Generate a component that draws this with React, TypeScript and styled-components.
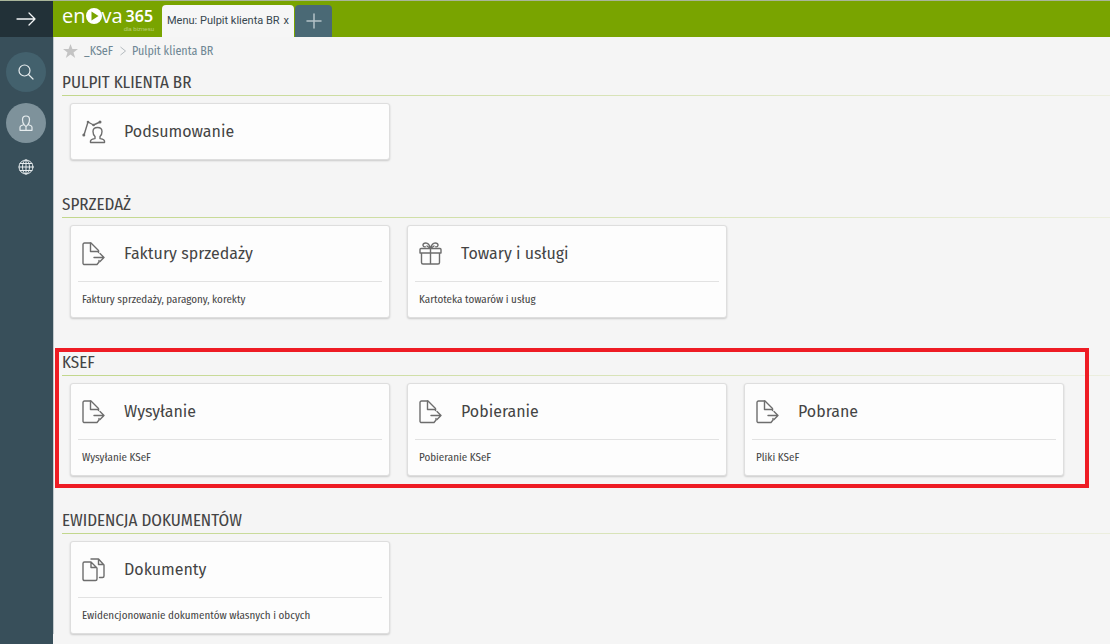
import React from 'react';
import styled, { createGlobalStyle, css } from 'styled-components';

const GlobalStyle = createGlobalStyle`
  *, *::before, *::after { box-sizing: border-box; }
  body {
    margin: 0;
    background: #f5f5f5;
    color: #444;
    font-family: "Fira Sans Condensed", "Noto Sans CJK JP", "Noto Sans", sans-serif;
  }
`;

const Page = styled.div`
  display: flex;
  min-height: 100vh;
  border-top: 1px solid #a9b59a;
`;

const Sidebar = styled.nav`
  flex: 0 0 53px;
  display: flex;
  flex-direction: column;
  align-items: center;
  background: #384f5a;
`;

const ExpandButton = styled.button`
  display: flex;
  align-items: center;
  justify-content: center;
  align-self: stretch;
  height: 36px;
  margin-bottom: 15px;
  padding: 0 1px 0 0;
  border: 0;
  background: #223138;
  color: #f4f6f7;
`;

const RoundButton = styled.button<{ $tone?: string; $small?: boolean }>`
  display: flex;
  align-items: center;
  justify-content: center;
  width: 40px;
  height: ${p => (p.$small ? 26 : 40)}px;
  margin: 0 1px 11px 0;
  padding: 0;
  border: 0;
  border-radius: 50%;
  background: ${p => p.$tone ?? 'transparent'};
  color: #e6ecee;
`;

const Main = styled.div`
  flex: 1;
  min-width: 0;
`;

const TopBar = styled.header`
  display: flex;
  align-items: flex-end;
  height: 36px;
  background: #79a400;
`;

const Logo = styled.a`
  display: flex;
  flex-direction: column;
  align-items: flex-end;
  align-self: flex-start;
  width: 101px;
  margin-right: 8px;
  padding: 5px 0 0 9px;
  color: #fff;
  text-decoration: none;
`;

const LogoLine = styled.span`
  display: flex;
  align-items: center;
  width: 92px;
  font: 20px/20px "Open Sans", sans-serif;
`;

const LogoNumber = styled.span`
  margin-left: 3px;
  font: 600 16px/20px "Noto Sans", sans-serif;
`;

const LogoTag = styled.span`
  font: 6px/6px "Liberation Sans", sans-serif;
  color: #bdd07c;
`;

const Tab = styled.div`
  display: flex;
  align-items: center;
  height: 32px;
  padding: 0 5px;
  border-radius: 4px 4px 0 0;
  background: #f6f6f6;
  color: #37474f;
  font: 11px/16px Roboto, Arial, sans-serif;
`;

const TabClose = styled.button`
  margin-left: 4px;
  padding: 0;
  border: 0;
  background: none;
  color: inherit;
  font: inherit;
`;

const AddTab = styled.button`
  display: flex;
  align-items: center;
  justify-content: center;
  width: 37px;
  height: 32px;
  margin-left: 1px;
  padding: 0;
  border: 0;
  border-radius: 4px 4px 0 0;
  background: #4a6975;
  color: #b4c2c8;
`;

const Content = styled.main`
  padding-left: 8px;
  border-left: 1px solid #c3cacd;
`;

const Breadcrumbs = styled.nav`
  display: flex;
  align-items: center;
  height: 27px;
  margin-bottom: 5px;
  font-size: 12px;
  line-height: 16px;
`;

const Crumb = styled.a`
  color: #6f8794;
  text-decoration: none;
`;

const CrumbStar = styled.button`
  display: flex;
  margin: 0 6px 0 1px;
  padding: 0;
  border: 0;
  background: none;
`;

const Chevron = styled.svg`
  margin: 0 5px 0 6px;
`;

const Section = styled.section`
  position: relative;
  margin-bottom: 31px;
`;

const SectionTitle = styled.h2`
  margin: 0 0 7px;
  padding: 2px 0 1px;
  background: linear-gradient(to right, #c2d78c, #eceedf) left bottom / 100% 1px no-repeat;
  font-size: 17px;
  font-weight: 400;
  line-height: 24px;
  text-transform: uppercase;
`;

const CardGrid = styled.div`
  display: grid;
  grid-template-columns: repeat(auto-fill, 320px);
  gap: 17px;
  padding-left: 8px;
`;

const Card = styled.a`
  display: block;
  padding: 0 7px;
  border: 1px solid #dedede;
  border-radius: 3px;
  background: #fdfdfd;
  box-shadow: 0 1px 2px rgba(0, 0, 0, 0.18);
  color: inherit;
  text-decoration: none;
`;

const CardHead = styled.div`
  display: flex;
  align-items: center;
  gap: 18px;
  height: 55px;
  padding-left: 4px;
`;

const CardTitle = styled.h3`
  margin: 0;
  font-family: "Fira Sans", "Noto Sans CJK JP", "Noto Sans", sans-serif;
  font-size: 16px;
  font-weight: 400;
  line-height: 24px;
`;

const CardNote = styled.p`
  margin: 0;
  padding: 10px 4px 9px;
  border-top: 1px solid #e2e2e2;
  font-size: 11px;
  line-height: 16px;
`;

const Highlight = styled.div`
  position: absolute;
  top: -1px;
  right: 21px;
  bottom: -12px;
  left: -7px;
  border: 4px solid #ee1c24;
  pointer-events: none;
`;

const lineArt = css`
  fill: none;
  stroke: currentColor;
  stroke-linecap: round;
  stroke-linejoin: round;
`;

const Icon = styled.svg<{ $weight?: number }>`
  ${lineArt}
  flex: none;
  stroke-width: ${p => p.$weight ?? 1};
`;

const CardIcon = styled(Icon)`
  color: #6d6d6d;
`;

type IconName = 'summary' | 'export' | 'gift' | 'documents';

const shapes: Record<IconName, React.ReactNode> = {
  summary: (
    <>
      <path d="M2 15L6 2l5.500 3L18 2" />
      <g fill="currentColor" stroke="none">
        <circle cx="1.800" cy="15" r="1.500" />
        <circle cx="6" cy="2" r="1.300" />
        <circle cx="11.500" cy="5" r="1.300" />
        <circle cx="18" cy="2" r="1.500" />
      </g>
      <path d="M13 18.500v-2c-1.600-1.400-2-3.300-2-5 0-2.500 1.500-4 4.500-4s4.500 1.500 4.500 4c0 1.700-.4 3.600-2 5v2c2 .5 4.500 1 4.500 2.500v1.500h-14V21c0-1.500 2.500-2 4.500-2.500z" />
    </>
  ),
  export: (
    <>
      <path d="M17 18.500v1.500l-2 2.500H2.500c-.8 0-1.500-.5-1.500-1.300V2.500C1 1.600 1.600 1 2.500 1H9l7.500 7.500v2" />
      <path d="M8.500 1v8.500h8M12 15.500h10M18 11.500l4 4-4 4" />
    </>
  ),
  gift: (
    <>
      <path d="M2 6.500h19c.7 0 1 .3 1 1V11H1V7.500c0-.7.300-1 1-1zM2.500 11v9.500c0 1 .5 1.500 1.500 1.500h15c1 0 1.500-.5 1.500-1.500V11M11.500 6.500V22" />
      <path d="M11.500 6.500C10.500 2.500 8.500 1 6.800 1 5 1 3.800 2 4 3.300c.2 1 1.200 1.700 2.200 1.500M11.500 6.500C12.500 2.500 14.500 1 16.200 1 18 1 19.200 2 19 3.300c-.2 1-1.200 1.700-2.200 1.500M11.500 6.500L8 4M11.500 6.500L15 4" />
    </>
  ),
  documents: (
    <>
      <path d="M2.500 4H9l6 6v11c0 .8-.5 1.500-1.500 1.500h-11C1.600 22.500 1 22 1 21V5.500C1 4.500 1.500 4 2.500 4zM9 4v5.500h5.500" />
      <path d="M9 1h7.500L22 7v11c0 1-.5 1.500-1.500 1.500h-3M16.500 1v5.500h5" />
    </>
  ),
};

const groups: {
  title: string;
  marked?: boolean;
  cards: { icon: IconName; title: string; note?: string }[];
}[] = [
  { title: 'Pulpit klienta BR', cards: [{ icon: 'summary', title: 'Podsumowanie' }] },
  {
    title: 'Sprzedaż',
    cards: [
      { icon: 'export', title: 'Faktury sprzedaży', note: 'Faktury sprzedaży, paragony, korekty' },
      { icon: 'gift', title: 'Towary i usługi', note: 'Kartoteka towarów i usług' },
    ],
  },
  {
    title: 'KSeF',
    marked: true,
    cards: [
      { icon: 'export', title: 'Wysyłanie', note: 'Wysyłanie KSeF' },
      { icon: 'export', title: 'Pobieranie', note: 'Pobieranie KSeF' },
      { icon: 'export', title: 'Pobrane', note: 'Pliki KSeF' },
    ],
  },
  {
    title: 'Ewidencja dokumentów',
    cards: [
      { icon: 'documents', title: 'Dokumenty', note: 'Ewidencjonowanie dokumentów własnych i obcych' },
    ],
  },
];

export default function App() {
  return (
    <>
      <GlobalStyle />
      <Page>
        <Sidebar>
          <ExpandButton aria-label="Rozwiń menu">
            <Icon width="20" height="14" viewBox="0 0 20 14" $weight={1.3}>
              <path d="M1 7h18M13 1l6 6-6 6" />
            </Icon>
          </ExpandButton>
          <RoundButton $tone="#43616d" aria-label="Szukaj">
            <Icon width="16" height="16" viewBox="0 0 16 16" $weight={1.2}>
              <circle cx="6.500" cy="6.500" r="5.500" />
              <path d="M10.500 10.500L15 15" />
            </Icon>
          </RoundButton>
          <RoundButton $tone="#7e929b" aria-label="Użytkownik">
            <Icon width="14" height="16" viewBox="0 0 14 16" $weight={1.2}>
              <path d="M5 9.500C3.500 8 3.500 6.500 3.500 4.500 3.500 2 5 1 7 1s3.500 1 3.500 3.500c0 2 0 3.500-1.500 5l3 1.200c.8.4 1 1 1 1.800v2.800H1v-2.800c0-.8.300-1.400 1-1.800zM5 9.700l2 2 2-2M7 11.700v3.500" />
            </Icon>
          </RoundButton>
          <RoundButton $small aria-label="Język">
            <Icon width="16" height="16" viewBox="0 0 16 16">
              <circle cx="8" cy="8" r="7" />
              <ellipse cx="8" cy="8" rx="3.500" ry="7" />
              <path d="M8 1v14M1 8h14M2 4.500h12M2 11.500h12" />
            </Icon>
          </RoundButton>
        </Sidebar>
        <Main>
          <TopBar>
            <Logo href="#">
              <LogoLine>
                en
                <svg width="16" height="16" viewBox="0 0 16 16">
                  <circle cx="8" cy="8" r="8" fill="#fff" />
                  <path d="M5.500 3.500L12.500 8l-7 4.500z" fill="#79a400" />
                </svg>
                va
                <LogoNumber>365</LogoNumber>
              </LogoLine>
              <LogoTag>dla biznesu</LogoTag>
            </Logo>
            <Tab>
              Menu: Pulpit klienta BR
              <TabClose aria-label="Zamknij kartę">x</TabClose>
            </Tab>
            <AddTab aria-label="Nowa karta">
              <Icon width="16" height="16" viewBox="0 0 16 16" $weight={1.5}>
                <path d="M8 1v14M1 8h14" />
              </Icon>
            </AddTab>
          </TopBar>
          <Content>
            <Breadcrumbs>
              <CrumbStar aria-label="Dodaj do ulubionych">
                <svg width="15" height="14" viewBox="0 0 15 14">
                  <path fill="#c4c4c4" d="M7.500 0l1.900 5H15l-4.500 3.400 1.700 5.600-4.700-3.400L2.800 14l1.700-5.600L0 5h5.600z" />
                </svg>
              </CrumbStar>
              <Crumb href="#">_KSeF</Crumb>
              <Chevron width="8" height="10" viewBox="0 0 8 10">
                <path d="M1.500 1l5 4-5 4" fill="none" stroke="#b5bcc0" />
              </Chevron>
              <Crumb href="#">Pulpit klienta BR</Crumb>
            </Breadcrumbs>
            {groups.map(group => (
              <Section key={group.title}>
                <SectionTitle>{group.title}</SectionTitle>
                <CardGrid>
                  {group.cards.map(card => (
                    <Card href="#" key={card.title}>
                      <CardHead>
                        <CardIcon width="24" height="24" viewBox="0 0 24 24" $weight={1.4}>
                          {shapes[card.icon]}
                        </CardIcon>
                        <CardTitle>{card.title}</CardTitle>
                      </CardHead>
                      {card.note && <CardNote>{card.note}</CardNote>}
                    </Card>
                  ))}
                </CardGrid>
                {group.marked && <Highlight />}
              </Section>
            ))}
          </Content>
        </Main>
      </Page>
    </>
  );
}
